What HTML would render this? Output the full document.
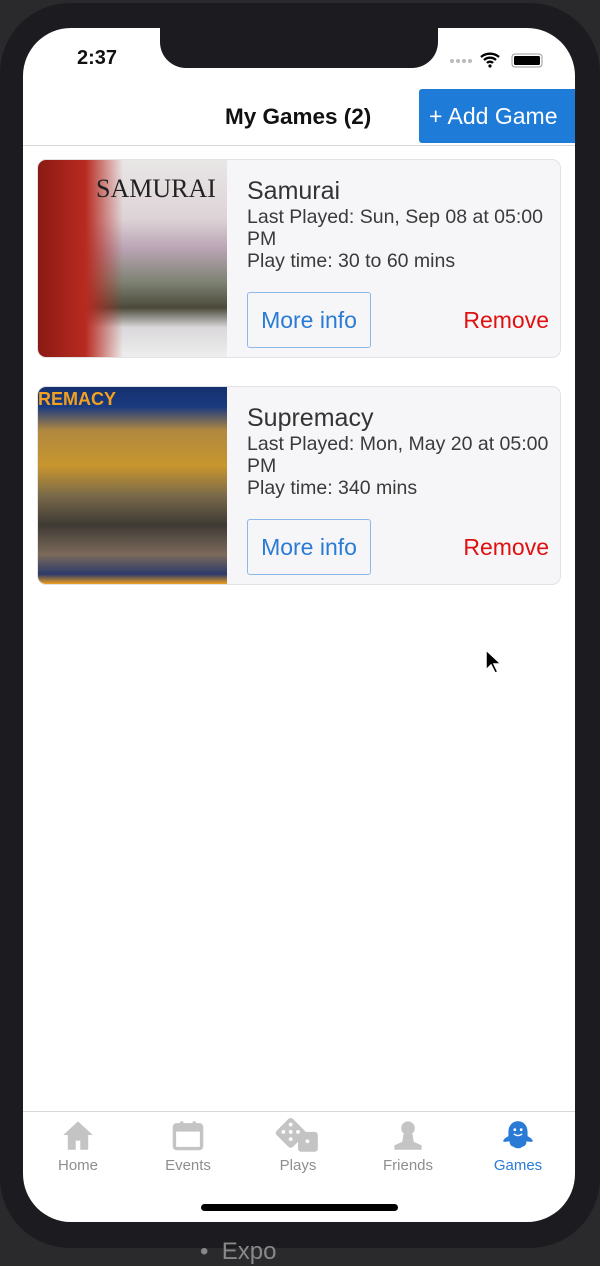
<!DOCTYPE html>
<html><head><meta charset="utf-8"><style>
*{margin:0;padding:0;box-sizing:border-box}
body{width:600px;height:1258px;background:#2a2a2c;font-family:"Liberation Sans",sans-serif;position:relative;overflow:hidden}
.phone{position:absolute;left:0;top:3px;width:600px;height:1245px;background:#1c1b1f;border-radius:70px}
.screen{position:absolute;left:23px;top:28px;width:552px;height:1194px;background:#fff;border-radius:48px;overflow:hidden}
.notch{position:absolute;left:137px;top:-2px;width:278px;height:42px;background:#1c1b1f;border-radius:0 0 26px 26px}
.time{position:absolute;left:54px;top:19px;font-size:20px;font-weight:bold;color:#111}
.hdr{position:absolute;left:0;top:117px;width:552px;height:1px;background:#d8d8d8}
.title{position:absolute;left:202px;top:76px;font-size:22.5px;font-weight:bold;color:#111}
.add{position:absolute;left:396px;top:61px;width:160px;height:54px;background:#1e7bd8;border-radius:3px;color:#fff;font-size:23px;line-height:54px;padding-left:10px;white-space:nowrap}
.card{position:absolute;left:14px;width:524px;height:199px;background:#f6f6f8;border:1px solid #e2e2e4;border-radius:9px;overflow:hidden}
.img{position:absolute;left:0;top:0;width:189px;height:197px;overflow:hidden}
.info{position:absolute;left:209px;top:16px;color:#333}
.info h2{font-weight:normal;font-size:25px;line-height:30px}
.info p{font-size:19.5px;line-height:22px;color:#3a3a3a;width:310px}
.more{position:absolute;left:209px;top:132px;width:124px;height:56px;border:1px solid #8bb9ea;border-radius:3px;color:#2a7bd5;font-size:23px;line-height:54px;text-align:center}
.rem{position:absolute;right:11px;top:147px;color:#e01010;font-size:23px}
.tab{position:absolute;left:0;top:1083px;width:552px;height:1px;background:#d8d8d8}
.ti{position:absolute;top:1090px;width:80px;text-align:center;font-size:15px;color:#8e8e8e}
.ti svg{display:block;margin:0 auto 5px;height:34px}
.bar{position:absolute;left:178px;top:1176px;width:197px;height:7px;border-radius:4px;background:#000}
</style></head><body>
<div class="phone"></div>
<div class="screen">
<div class="notch"></div>
<div class="time">2:37</div>
<svg style="position:absolute;left:426px;top:23px" width="130" height="18"><g fill="#bbb"><circle cx="3" cy="10" r="2"/><circle cx="9" cy="10" r="2"/><circle cx="15" cy="10" r="2"/><circle cx="21" cy="10" r="2"/></g><path d="M32 6a14 14 0 0 1 18 0M35 9a9 9 0 0 1 12 0M38 12a4 4 0 0 1 6 0" stroke="#000" stroke-width="2.4" fill="none"/><circle cx="41" cy="15" r="1.6"/><rect x="63" y="3" width="30" height="13" rx="3" fill="none" stroke="#999"/><rect x="65" y="5" width="26" height="9" rx="1.5" fill="#000"/></svg>
<div class="title">My Games (2)</div>
<div class="add">+ Add Game</div>
<div class="hdr"></div>

<div class="card" style="top:131px">
<div class="img" style="background:linear-gradient(90deg,#8a1a14 0,#b82a20 25%,rgba(0,0,0,0) 45%),linear-gradient(180deg,#e9e6e6 0,#ddd3d6 30%,#b9a4b4 45%,#7d8272 62%,#4b4a3a 75%,#dad8da 85%,#eee 100%)">
<div style="position:absolute;left:58px;top:14px;font-size:26px;font-family:'Liberation Serif',serif;color:#222">SAMURAI</div></div>
<div class="info"><h2>Samurai</h2><p>Last Played: Sun, Sep 08 at 05:00 PM</p><p>Play time: 30 to 60 mins</p></div>
<div class="more">More info</div><div class="rem">Remove</div>
</div>

<div class="card" style="top:358px">
<div class="img" style="background:linear-gradient(180deg,#15306e 0,#1a3a80 10%,#b08840 22%,#c8962e 40%,#7a6a4a 55%,#3e3a34 70%,#7c6a5a 85%,#2c3a6a 95%,#f0a020 100%)">
<div style="position:absolute;left:0;top:2px;font-size:18px;font-weight:bold;color:#f2a020">REMACY</div></div>
<div class="info"><h2>Supremacy</h2><p>Last Played: Mon, May 20 at 05:00 PM</p><p>Play time: 340 mins</p></div>
<div class="more">More info</div><div class="rem">Remove</div>
</div>

<div class="tab"></div>
<div class="ti" style="left:15px"><svg width="34" height="34" viewBox="0 0 30 30"><path d="M15 3L2 15h4v13h7v-8h4v8h7V15h4z" fill="#c4c4c4"/></svg>Home</div>
<div class="ti" style="left:125px"><svg width="34" height="34" viewBox="0 0 30 30"><rect x="3" y="6" width="24" height="21" rx="2" fill="none" stroke="#c4c4c4" stroke-width="3"/><rect x="3" y="6" width="24" height="6" fill="#c4c4c4"/><rect x="8" y="3" width="3" height="5" fill="#c4c4c4"/><rect x="19" y="3" width="3" height="5" fill="#c4c4c4"/></svg>Events</div>
<div class="ti" style="left:235px"><svg width="48" height="34" viewBox="0 0 46 32"><rect x="5" y="3" width="22" height="22" rx="3" transform="rotate(45 16 14)" fill="#c4c4c4"/><rect x="23" y="13" width="19" height="19" rx="3" fill="#c4c4c4"/><g fill="#fff"><circle cx="16" cy="6" r="1.8"/><circle cx="9" cy="13" r="1.8"/><circle cx="16" cy="13" r="1.8"/><circle cx="23" cy="13" r="1.8"/><circle cx="16" cy="20" r="1.8"/><circle cx="32" cy="22" r="1.8"/></g></svg>Plays</div>
<div class="ti" style="left:345px"><svg width="34" height="34" viewBox="0 0 30 30"><circle cx="15" cy="9" r="6" fill="#c4c4c4"/><path d="M11 14h8l1 7 7 3v4H3v-4l7-3z" fill="#c4c4c4"/></svg>Friends</div>
<div class="ti" style="left:455px;color:#2a7bd5"><svg width="34" height="34" viewBox="0 0 32 30"><path d="M16 2c-6 0-9 5-9 10v4c-2 1-5 3-5 5 2 1 4 0 6 0 0 3 2 5 4 5 2 2 6 2 8 0 2 0 4-2 4-5 2 0 4 1 6 0 0-2-3-4-5-5v-4c0-5-3-10-9-10z" fill="#2a7bd5"/><circle cx="13" cy="10" r="1.3" fill="#fff"/><circle cx="19" cy="10" r="1.3" fill="#fff"/><path d="M12 14q4 3 8 0" stroke="#fff" stroke-width="1.3" fill="none"/></svg>Games</div>
<div class="bar"></div>
</div>
<svg style="position:absolute;left:484px;top:648px" width="18" height="28"><path d="M2 2v20l5-5 4 8 3-1-4-8h7z" fill="#000" stroke="#fff" stroke-width="1.5"/></svg>
<div style="position:absolute;left:200px;top:1238px;color:#888;font-size:24px">• &nbsp;Expo</div>
</body></html>
